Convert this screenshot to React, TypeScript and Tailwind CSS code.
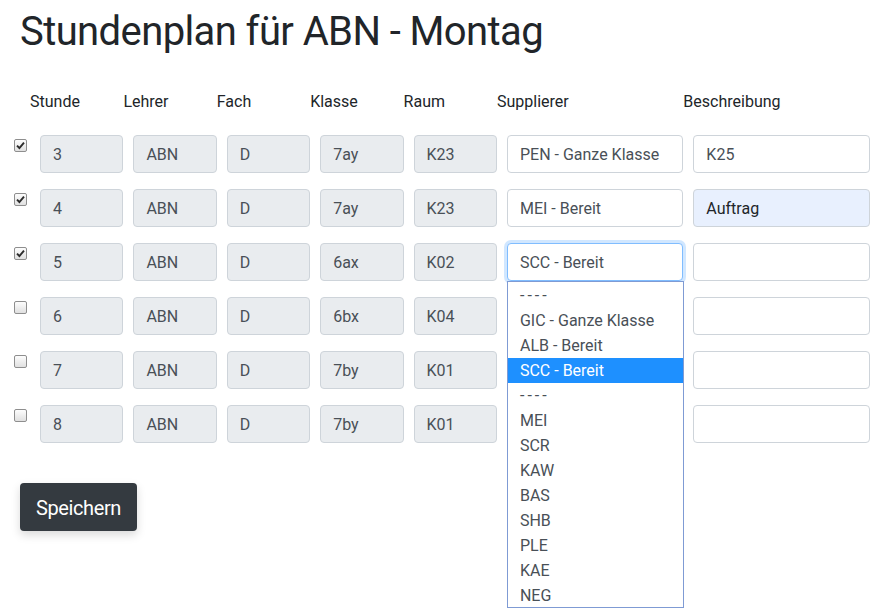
import React from "react";

const font = { fontFamily: 'Roboto, "Noto Sans", sans-serif' };

type Row = {
  checked: boolean;
  stunde: string;
  klasse: string;
  raum: string;
  supp: string;
  besch: string;
  auto?: boolean;
};

const rows: Row[] = [
  { checked: true, stunde: "3", klasse: "7ay", raum: "K23", supp: "PEN - Ganze Klasse", besch: "K25" },
  { checked: true, stunde: "4", klasse: "7ay", raum: "K23", supp: "MEI - Bereit", besch: "Auftrag", auto: true },
  { checked: true, stunde: "5", klasse: "6ax", raum: "K02", supp: "SCC - Bereit", besch: "" },
  { checked: false, stunde: "6", klasse: "6bx", raum: "K04", supp: "", besch: "" },
  { checked: false, stunde: "7", klasse: "7by", raum: "K01", supp: "", besch: "" },
  { checked: false, stunde: "8", klasse: "7by", raum: "K01", supp: "", besch: "" },
];

const options = [
  "----",
  "GIC - Ganze Klasse",
  "ALB - Bereit",
  "SCC - Bereit",
  "----",
  "MEI",
  "SCR",
  "KAW",
  "BAS",
  "SHB",
  "PLE",
  "KAE",
  "NEG",
];

function Check({ checked }: { checked: boolean }) {
  return (
    <div className="h-[13px] w-[13px] mt-[4px] rounded-[2px] border border-[#8e8e8e] bg-gradient-to-b from-[#fdfdfd] to-[#e0e0e0] flex items-center justify-center">
      {checked && (
        <svg width="9" height="9" viewBox="0 0 9 9">
          <path d="M1 4.6 L3.4 7 L8 1.6" stroke="#2b2b2b" strokeWidth="1.9" fill="none" />
        </svg>
      )}
    </div>
  );
}

function RO({ v }: { v: string }) {
  return (
    <div className="h-[38px] rounded-[4px] border border-[#ced4da] bg-[#e9ecef] px-[12px] pt-[2px] flex items-center text-[16px] text-[#495057]">
      {v}
    </div>
  );
}

const grid = "grid grid-cols-[83.4px_83.4px_83.4px_83.4px_83.4px_176.4px_177px] gap-x-[10px]";

export default function App() {
  return (
    <div className="bg-white w-[890px] h-[613px] overflow-hidden relative" style={font}>
      <h1 className="text-[40px] leading-[48px] tracking-[-0.6px] text-[#212529] pl-[20px] pt-[8px] font-normal">
        Stundenplan für ABN - Montag
      </h1>
      <div className={`${grid} pl-[30px] mt-[33px] pt-[1px] text-[16px] leading-[24px] text-[#212529]`}>
        <div>Stunde</div>
        <div>Lehrer</div>
        <div>Fach</div>
        <div>Klasse</div>
        <div>Raum</div>
        <div>Supplierer</div>
        <div>Beschreibung</div>
      </div>
      <div className="mt-[21px] flex flex-col gap-[16px]">
        {rows.map((r, i) => (
          <div key={i} className="flex pl-[14px]">
            <div className="w-[26px]">
              <Check checked={r.checked} />
            </div>
            <div className={grid}>
              <RO v={r.stunde} />
              <RO v="ABN" />
              <RO v="D" />
              <RO v={r.klasse} />
              <RO v={r.raum} />
              <div className="relative">
                <div
                  className={`h-[38px] rounded-[4px] border bg-white px-[12px] pt-[2px] flex items-center text-[16px] text-[#495057] ${
                    i === 2
                      ? "border-[#80bdff] shadow-[0_0_0_3px_rgba(0,123,255,0.18)]"
                      : "border-[#ced4da]"
                  }`}
                >
                  {r.supp}
                </div>
                {i === 2 && (
                  <div className="absolute z-10 left-0 top-[38px] w-[177px] h-[327px] bg-white border border-[#7f9bd4] pt-[1px]">
                    {options.map((o, j) => (
                      <div
                        key={j}
                        className={`h-[25px] leading-[25px] pl-[12px] text-[16px] ${
                          j === 3 ? "bg-[#1e90ff] text-white" : "text-[#495057]"
                        } ${o === "----" ? "tracking-[3px]" : ""}`}
                      >
                        {o}
                      </div>
                    ))}
                  </div>
                )}
              </div>
              <div
                className={`h-[38px] rounded-[4px] border border-[#ced4da] px-[12px] pt-[2px] flex items-center text-[16px] ${
                  r.auto ? "bg-[#e8f0fe] text-[#212529]" : "bg-white text-[#495057]"
                }`}
              >
                {r.besch}
              </div>
            </div>
          </div>
        ))}
      </div>
      <div className="pl-[20px] mt-[40px]">
        <button className="h-[48px] w-[117px] rounded-[4px] bg-[#343a40] text-white text-[20px] tracking-[-0.4px] pt-[1px] shadow-[0_4px_10px_rgba(0,0,0,0.15)]">
          Speichern
        </button>
      </div>
    </div>
  );
}
